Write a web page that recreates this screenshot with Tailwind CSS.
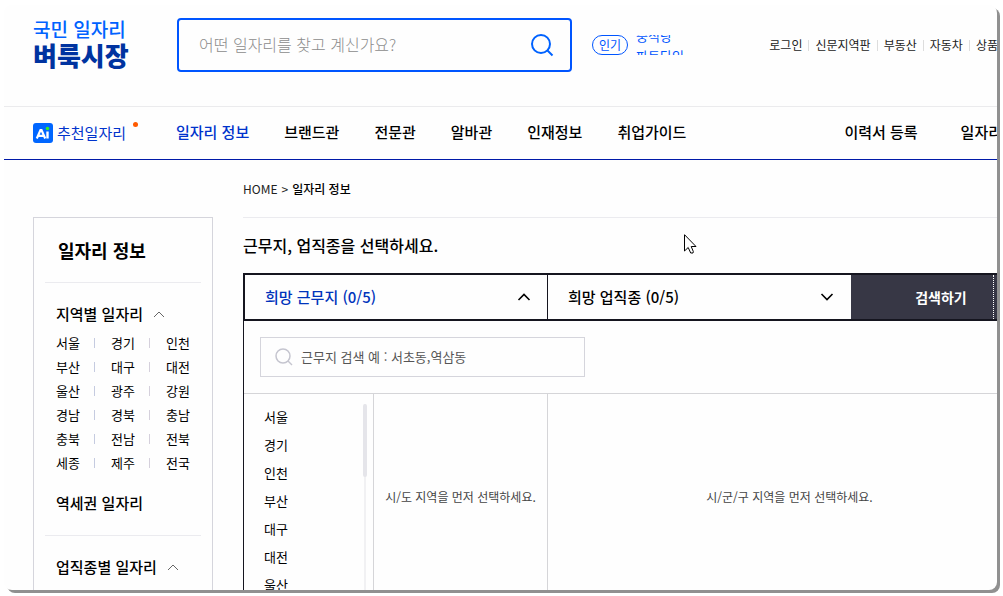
<!DOCTYPE html>
<html lang="ko">
<head>
<meta charset="utf-8">
<title>벼룩시장 - 일자리 정보</title>
<script src="https://cdn.jsdelivr.net/npm/@tailwindcss/browser@4"></script>
</head>
<body class="h-screen overflow-hidden bg-white pt-[5px] pr-[6px] pb-[6px] pl-1 font-['Noto_Sans_CJK_KR',sans-serif] text-black">
<div class="relative flex h-full flex-col overflow-hidden rounded-lg bg-[#fefefe] whitespace-nowrap shadow-[3px_3px_0_#909090]">

  <header class="shrink-0">
    <div class="flex h-[101px] items-start pl-[29px]">
      <a href="#" class="mt-3 block w-36 shrink-0">
        <span class="block text-[19px] leading-6 font-medium text-[#0062ff]">국민 일자리</span>
        <span class="block text-[26px] leading-7 font-black text-[#0033a0]">벼룩시장</span>
      </a>
      <form class="mt-[13px] flex h-[54px] w-[395px] shrink-0 items-center rounded border-2 border-[#0055ff] pr-4 pl-5">
        <input type="text" aria-label="일자리 검색" placeholder="어떤 일자리를 찾고 계신가요?" class="min-w-0 flex-1 bg-transparent pb-0.5 text-[16px] font-light outline-none placeholder:text-[#8c8c8c]">
        <button type="button" aria-label="검색" class="text-[#0062ff]">
          <svg width="24" height="24" viewBox="0 0 24 24" fill="none" stroke="currentColor" stroke-width="2"><circle cx="11" cy="11" r="9"/><path d="M17.5 17.5 22.5 22.5"/></svg>
        </button>
      </form>
      <div class="mt-[30px] ml-5 flex h-5 shrink-0 gap-2 text-[#0055ff]">
        <span class="flex h-5 w-9 items-center justify-center rounded-full border border-[#0055ff] text-[12px]">인기</span>
        <div class="h-5 overflow-hidden text-[13px] leading-5">
          <a href="#" class="-mt-[9px] block">중식당</a>
          <a href="#" class="block">파트타임</a>
        </div>
      </div>
      <nav aria-label="서비스" class="mt-[30px] -mr-px ml-auto flex h-5 items-center gap-[6px] text-[12px] text-[#222222]">
        <a href="#">로그인</a><span class="h-[11px] w-px bg-[#dddddd]"></span>
        <a href="#">신문지역판</a><span class="h-[11px] w-px bg-[#dddddd]"></span>
        <a href="#">부동산</a><span class="h-[11px] w-px bg-[#dddddd]"></span>
        <a href="#">자동차</a><span class="h-[11px] w-px bg-[#dddddd]"></span>
        <a href="#">상품</a>
      </nav>
    </div>
    <nav aria-label="주 메뉴" class="flex h-[54px] items-center border-t border-b border-t-[#ebebed] border-b-[#0019a8] pl-[29px] text-[15px] font-medium">
      <a href="#" class="relative flex w-[143px] shrink-0 items-center gap-1 font-normal text-[#0033cc]">
        <svg width="20" height="20" viewBox="0 0 20 20"><rect width="20" height="20" rx="3" fill="#0066ff"/><path d="M3.800 15.500 7.500 7H8.500L12.200 15.500M5.500 12.800H10.500" fill="none" stroke="#fff" stroke-width="2.200"/><path d="M14.500 8.500V15.500" stroke="#fff" stroke-width="2.400"/><circle cx="14.500" cy="5.500" r="1.800" fill="#33ee22"/></svg>
        추천일자리
        <span class="absolute top-0 left-[100px] size-[5px] rounded-full bg-[#ff5a00]"></span>
      </a>
      <div class="flex gap-[35px] pb-0.5">
        <a href="#" class="text-[#0033cc]">일자리 정보</a>
        <a href="#">브랜드관</a>
        <a href="#">전문관</a>
        <a href="#">알바관</a>
        <a href="#">인재정보</a>
        <a href="#">취업가이드</a>
      </div>
      <div class="-mr-[5px] ml-auto flex gap-[43px] pb-0.5">
        <a href="#">이력서 등록</a>
        <a href="#">일자리</a>
      </div>
    </nav>
  </header>

  <div class="flex min-h-0 flex-1 gap-[30px] pl-[29px]">
    <aside class="mt-[57px] w-[180px] shrink-0 border border-b-0 border-[#d5d5dc] px-[11px]">
      <h2 class="flex h-[65px] items-center border-b border-[#ebebef] pl-[13px] text-[18px] font-bold">일자리 정보</h2>
      <section class="h-[253px] border-b border-[#ebebef] pl-[11px]">
        <h3 class="flex items-center gap-[10px] pt-[19px] text-[15px] leading-6 font-medium">지역별 일자리
          <svg width="12" height="7" viewBox="0 0 12 7" fill="none" stroke="#666"><path d="M1 6 6 1 11 6"/></svg>
        </h3>
        <ul class="mt-[5px] grid grid-cols-[55px_55px_1fr] text-[13px] leading-6">
          <li class="flex items-center gap-[14px]"><a href="#">서울</a><span class="h-[10px] w-px bg-[#c5cbe0]"></span></li>
          <li class="flex items-center gap-[14px]"><a href="#">경기</a><span class="h-[10px] w-px bg-[#d5d0dc]"></span></li>
          <li><a href="#">인천</a></li>
          <li class="flex items-center gap-[14px]"><a href="#">부산</a><span class="h-[10px] w-px bg-[#c5cbe0]"></span></li>
          <li class="flex items-center gap-[14px]"><a href="#">대구</a><span class="h-[10px] w-px bg-[#d5d0dc]"></span></li>
          <li><a href="#">대전</a></li>
          <li class="flex items-center gap-[14px]"><a href="#">울산</a><span class="h-[10px] w-px bg-[#c5cbe0]"></span></li>
          <li class="flex items-center gap-[14px]"><a href="#">광주</a><span class="h-[10px] w-px bg-[#d5d0dc]"></span></li>
          <li><a href="#">강원</a></li>
          <li class="flex items-center gap-[14px]"><a href="#">경남</a><span class="h-[10px] w-px bg-[#c5cbe0]"></span></li>
          <li class="flex items-center gap-[14px]"><a href="#">경북</a><span class="h-[10px] w-px bg-[#d5d0dc]"></span></li>
          <li><a href="#">충남</a></li>
          <li class="flex items-center gap-[14px]"><a href="#">충북</a><span class="h-[10px] w-px bg-[#c5cbe0]"></span></li>
          <li class="flex items-center gap-[14px]"><a href="#">전남</a><span class="h-[10px] w-px bg-[#d5d0dc]"></span></li>
          <li><a href="#">전북</a></li>
          <li class="flex items-center gap-[14px]"><a href="#">세종</a><span class="h-[10px] w-px bg-[#c5cbe0]"></span></li>
          <li class="flex items-center gap-[14px]"><a href="#">제주</a><span class="h-[10px] w-px bg-[#d5d0dc]"></span></li>
          <li><a href="#">전국</a></li>
        </ul>
        <h3 class="mt-4 text-[15px] leading-6 font-medium"><a href="#">역세권 일자리</a></h3>
      </section>
      <h3 class="flex items-center gap-[10px] pt-[19px] pl-[11px] text-[15px] leading-6 font-medium">업직종별 일자리
        <svg width="12" height="7" viewBox="0 0 12 7" fill="none" stroke="#666"><path d="M1 6 6 1 11 6"/></svg>
      </h3>
    </aside>

    <main class="-mr-[34px] flex min-w-0 flex-1 flex-col">
      <div class="flex h-[58px] shrink-0 items-center gap-1 border-b border-[#ebebef] text-[12px] text-[#222222]">
        <a href="#">HOME</a><span>&gt;</span><span class="font-medium text-black">일자리 정보</span>
      </div>
      <h1 class="flex h-[55px] shrink-0 items-center pb-0.5 text-[16px] font-medium">근무지, 업직종을 선택하세요.</h1>
      <div class="flex h-12 shrink-0 border-2 border-r-0 border-[#15151f] text-[15px] font-medium">
        <button type="button" class="flex w-[303px] shrink-0 items-center justify-between border-r border-[#15151f] pr-4 pl-5 text-[#0033bb]">희망 근무지 (0/5)
          <svg width="14" height="8" viewBox="0 0 14 8" fill="none" stroke="#000" stroke-width="1.600"><path d="M1.500 7 7 1.500 12.500 7"/></svg>
        </button>
        <button type="button" class="flex w-[303px] shrink-0 items-center justify-between pr-[17px] pl-5">희망 업직종 (0/5)
          <svg width="14" height="8" viewBox="0 0 14 8" fill="none" stroke="#000" stroke-width="1.600"><path d="M1.500 1 7 6.500 12.500 1"/></svg>
        </button>
        <button type="button" class="relative flex-1 bg-[#373745] text-[14px] font-bold text-white">검색하기
          <span class="absolute inset-y-0 right-[37px] border-r border-dotted border-white"></span>
        </button>
      </div>
      <div class="flex min-h-0 flex-1 flex-col border-l border-[#15151f]">
        <div class="border-b border-[#d5d5d8] p-4">
          <label class="flex h-10 w-[325px] items-center gap-2 border border-[#d5d5dc] pl-[14px]">
            <svg width="18" height="18" viewBox="0 0 18 18" fill="none" stroke="#c5c5cf" stroke-width="1.500"><circle cx="8" cy="8" r="7"/><path d="M13 13 17 17"/></svg>
            <input type="text" aria-label="근무지 검색" placeholder="근무지 검색 예 : 서초동,역삼동" class="min-w-0 flex-1 bg-transparent text-[13px] outline-none placeholder:text-[#555555]">
          </label>
        </div>
        <div class="flex min-h-0 flex-1 overflow-hidden">
          <div class="flex w-[130px] shrink-0 justify-between border-r border-[#d5d5d8] pr-[6px] pl-5">
            <ul class="pt-[9px] text-[13px] leading-7">
              <li><a href="#">서울</a></li>
              <li><a href="#">경기</a></li>
              <li><a href="#">인천</a></li>
              <li><a href="#">부산</a></li>
              <li><a href="#">대구</a></li>
              <li><a href="#">대전</a></li>
              <li><a href="#">울산</a></li>
            </ul>
            <div class="flex w-1 justify-center pt-[10px]">
              <div class="flex w-[2px] justify-center bg-[#f1f1f3]"><span class="h-[73px] w-1 shrink-0 rounded-full bg-[#e5e5ea]"></span></div>
            </div>
          </div>
          <p class="w-[174px] shrink-0 border-r border-[#d5d5d8] pt-[93px] text-center text-[12px] leading-5 text-[#444444]">시/도 지역을 먼저 선택하세요.</p>
          <p class="flex-1 pt-[93px] text-center text-[12px] leading-5 text-[#444444]">시/군/구 지역을 먼저 선택하세요.</p>
        </div>
      </div>
    </main>
  </div>

  <svg class="absolute top-[229px] left-[680px]" width="13" height="20" viewBox="0 0 13 20" fill="#fff" stroke="#000" stroke-width="1"><path d="M.5.700V17L4.200 13.500 6.700 19H9L9.300 17.500 7.200 12.500H12Z"/></svg>
</div>
</body>
</html>
